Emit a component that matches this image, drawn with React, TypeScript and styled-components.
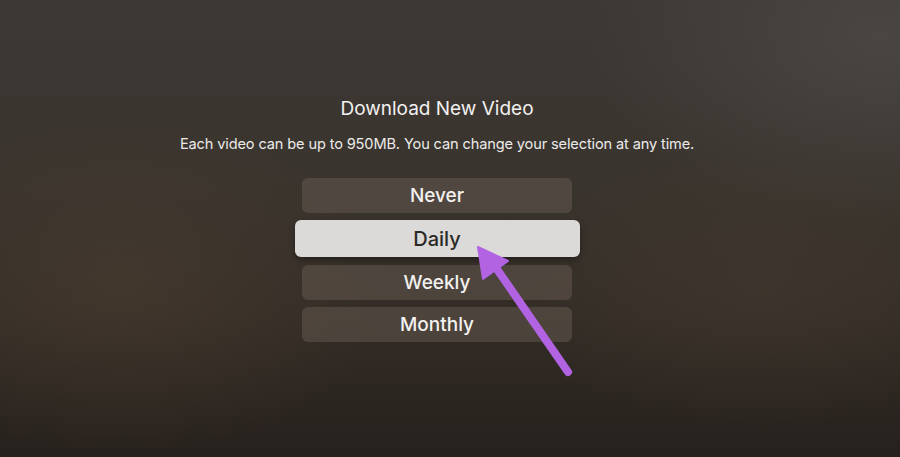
import React from "react";
import styled, { createGlobalStyle } from "styled-components";

const Global = createGlobalStyle`
  html, body { margin: 0; padding: 0; }
  body { background: #2a2520; font-family: Inter, "Open Sans", Arial, sans-serif; }
`;

const Screen = styled.div`
  position: relative;
  width: 900px;
  height: 457px;
  overflow: hidden;
  display: flex;
  flex-direction: column;
  align-items: center;
  padding-top: 96px;
  box-sizing: border-box;
  padding-right: 26px;
  background:
    radial-gradient(ellipse 420px 260px at 880px 40px, rgba(86, 84, 82, 0.5), rgba(86, 84, 82, 0) 70%),
    radial-gradient(ellipse 380px 240px at 120px 290px, rgba(82, 66, 50, 0.45), rgba(82, 66, 50, 0) 70%),
    radial-gradient(ellipse 360px 200px at 760px 290px, rgba(78, 66, 54, 0.35), rgba(78, 66, 54, 0) 70%),
    linear-gradient(180deg, #3c3834 0%, #3a342e 40%, #332c26 70%, #26211d 100%);
`;

const Title = styled.h1`
  margin: 0;
  font-size: 19px;
  line-height: 26px;
  font-weight: 400;
  color: #f2f0ee;
  letter-spacing: 0;
`;

const Subtitle = styled.p`
  margin: 12px 0 0;
  font-size: 14.6px;
  line-height: 20px;
  font-weight: 400;
  color: #ecebe9;
  letter-spacing: -0.14px;
`;

const Menu = styled.div`
  margin-top: 24px;
  display: flex;
  flex-direction: column;
  align-items: center;
  gap: 7px;
`;

const Option = styled.div<{ $focused?: boolean }>`
  display: flex;
  align-items: center;
  justify-content: center;
  box-sizing: border-box;
  width: ${(p) => (p.$focused ? "285px" : "270px")};
  height: ${(p) => (p.$focused ? "37px" : "35px")};
  margin-bottom: ${(p) => (p.$focused ? "1px" : "0")};
  border-radius: 6px;
  font-size: ${(p) => (p.$focused ? "20px" : "19px")};
  font-weight: 500;
  color: ${(p) => (p.$focused ? "#2b2926" : "#f3f1ef")};
  background: ${(p) => (p.$focused ? "#dcdad8" : "rgba(112, 101, 90, 0.42)")};
  box-shadow: ${(p) => (p.$focused ? "0 3px 6px rgba(0,0,0,0.35)" : "none")};
`;

const Pointer = styled.svg`
  position: absolute;
  left: 0;
  top: 0;
  width: 900px;
  height: 457px;
  pointer-events: none;
`;

export default function App() {
  const options = ["Never", "Daily", "Weekly", "Monthly"];
  return (
    <>
      <Global />
      <Screen>
        <Title>Download New Video</Title>
        <Subtitle>Each video can be up to 950MB. You can change your selection at any time.</Subtitle>
        <Menu>
          {options.map((o) => (
            <Option key={o} $focused={o === "Daily"}>
              {o}
            </Option>
          ))}
        </Menu>
        <Pointer viewBox="0 0 900 457">
          <line x1="568" y1="372" x2="492" y2="262" stroke="#b263e2" strokeWidth="8" strokeLinecap="round" />
          <polygon points="478,247 508,261 483,279" fill="#b263e2" stroke="#b263e2" strokeWidth="2" strokeLinejoin="round" />
        </Pointer>
      </Screen>
    </>
  );
}
